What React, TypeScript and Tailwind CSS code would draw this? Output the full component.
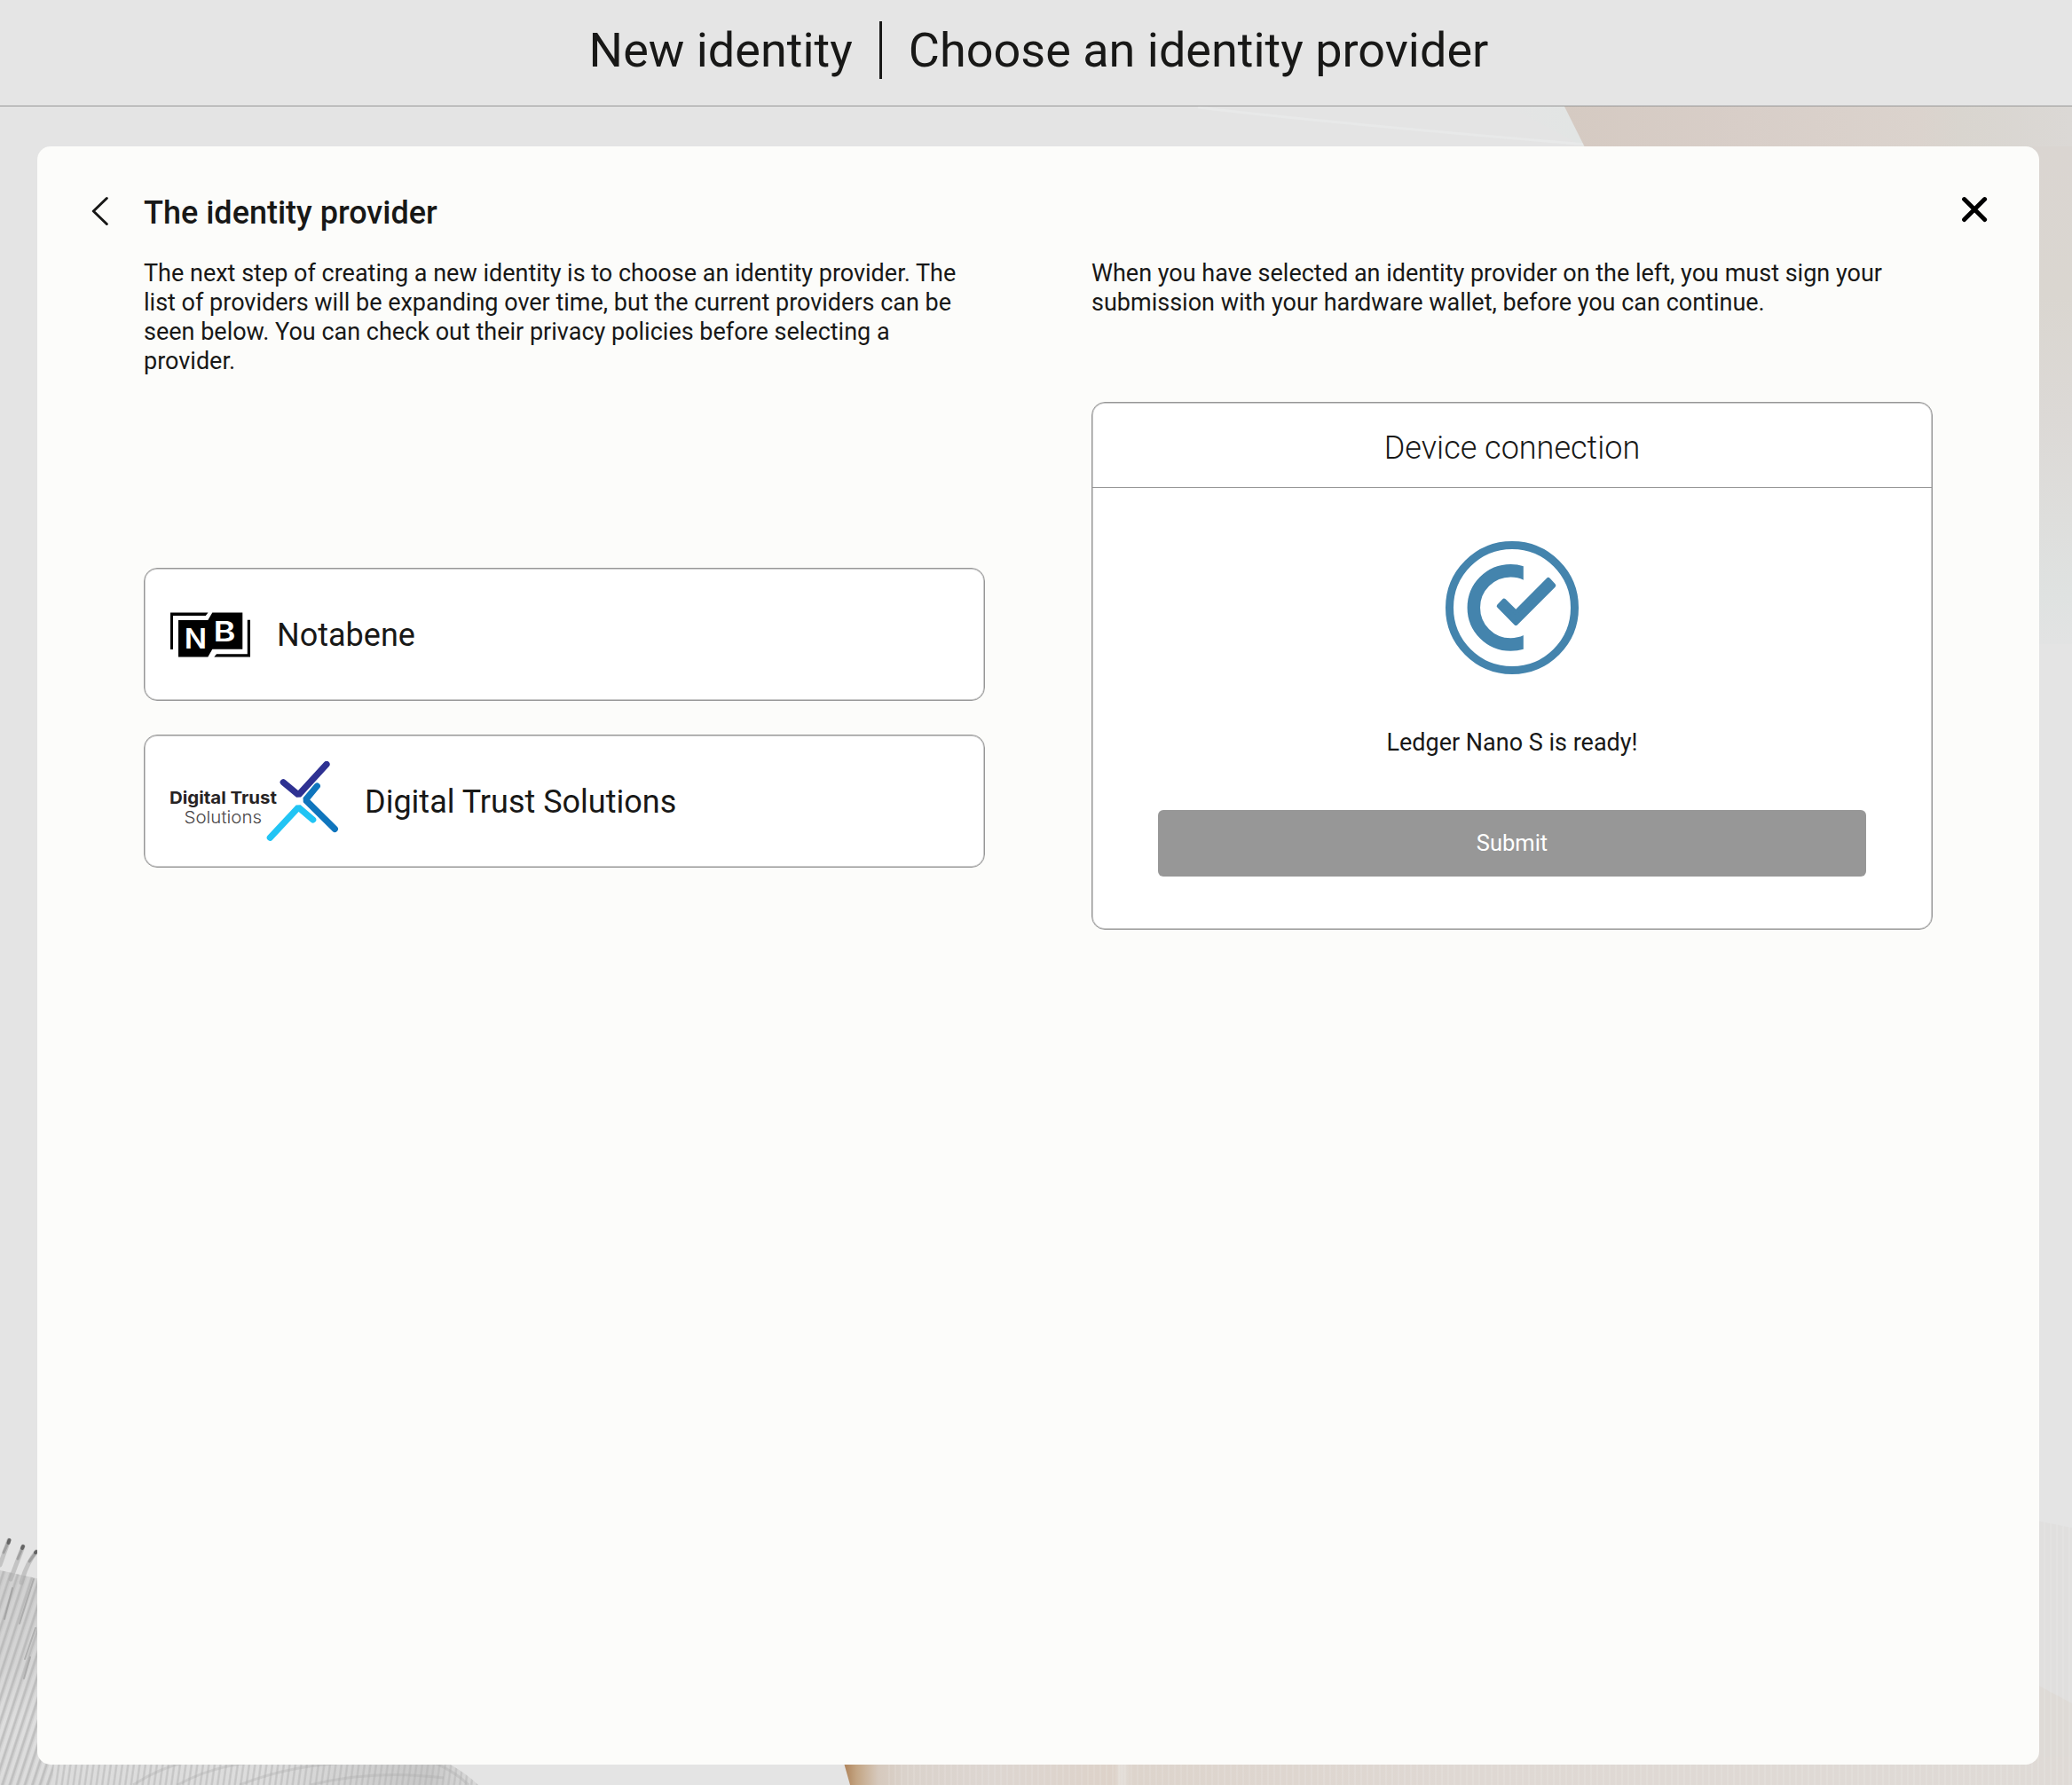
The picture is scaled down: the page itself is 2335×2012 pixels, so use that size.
import type { ReactNode } from "react";

function Backdrop() {
  return (
    <svg className="pointer-events-none absolute inset-0" width="2335" height="2012" viewBox="0 0 2335 2012" aria-hidden="true">
      <defs>
        <linearGradient id="silkTop" gradientUnits="userSpaceOnUse" x1="1763" y1="0" x2="2335" y2="0">
          <stop offset="0" stopColor="#d5cac2" />
          <stop offset="0.35" stopColor="#d8cec8" />
          <stop offset="0.7" stopColor="#dbd3cd" />
          <stop offset="0.78" stopColor="#d9d5cf" />
          <stop offset="1" stopColor="#dbd8d5" />
        </linearGradient>
        <linearGradient id="silkSide" gradientUnits="userSpaceOnUse" x1="0" y1="165" x2="0" y2="726">
          <stop offset="0" stopColor="#dad5d1" />
          <stop offset="0.3" stopColor="#dad6d0" />
          <stop offset="0.55" stopColor="#dcd9d6" />
          <stop offset="0.75" stopColor="#dededc" />
          <stop offset="0.9" stopColor="#dfe2e1" />
          <stop offset="1" stopColor="#e2e3e3" />
        </linearGradient>
        <linearGradient id="silkLow" gradientUnits="userSpaceOnUse" x1="951" y1="0" x2="2335" y2="0">
          <stop offset="0" stopColor="#ae8259" />
          <stop offset="0.01" stopColor="#c3a482" />
          <stop offset="0.028" stopColor="#d6c9bd" />
          <stop offset="0.05" stopColor="#dad2cb" />
          <stop offset="0.12" stopColor="#ddd6d1" />
          <stop offset="0.22" stopColor="#ddd2c9" />
          <stop offset="0.226" stopColor="#e4dfda" />
          <stop offset="0.234" stopColor="#ddd4cc" />
          <stop offset="0.5" stopColor="#dfd8d3" />
          <stop offset="1" stopColor="#dfdad6" />
        </linearGradient>
        <linearGradient id="mist" gradientUnits="userSpaceOnUse" x1="1700" y1="0" x2="1775" y2="0">
          <stop offset="0" stopColor="#e2e5e4" stopOpacity="0" />
          <stop offset="1" stopColor="#e2e5e4" />
        </linearGradient>
        <linearGradient id="threadShade" gradientUnits="userSpaceOnUse" x1="0" y1="1765" x2="0" y2="2012">
          <stop offset="0" stopColor="#d0d0d0" />
          <stop offset="0.45" stopColor="#d5d5d5" />
          <stop offset="0.7" stopColor="#dedede" />
          <stop offset="1" stopColor="#dcdcdc" />
        </linearGradient>
        <linearGradient id="foldShade" gradientUnits="userSpaceOnUse" x1="300" y1="0" x2="530" y2="0">
          <stop offset="0" stopColor="#b4b4b4" stopOpacity="0" />
          <stop offset="0.8" stopColor="#b4b4b4" stopOpacity="0.5" />
          <stop offset="1" stopColor="#c4c4c4" stopOpacity="0.2" />
        </linearGradient>
        <pattern id="threads" width="8.5" height="40" patternUnits="userSpaceOnUse" patternTransform="skewX(-18)">
          <rect x="0" width="1" height="40" fill="#b4b4b4" opacity="0.5" />
          <rect x="1" width="2" height="40" fill="#a8a8a8" opacity="0.6" />
          <rect x="3" width="1.5" height="40" fill="#bcbcbc" opacity="0.4" />
        </pattern>
        <pattern id="threadsFine" width="6.5" height="40" patternUnits="userSpaceOnUse" patternTransform="skewX(-8)">
          <rect x="0" width="1" height="40" fill="#b4b4b4" opacity="0.4" />
          <rect x="1" width="1.5" height="40" fill="#a8a8a8" opacity="0.5" />
        </pattern>
        <pattern id="weave" width="7" height="40" patternUnits="userSpaceOnUse">
          <rect width="2" height="40" fill="#ffffff" opacity="0.1" />
        </pattern>
      </defs>

      <path d="M1700 120H1763L1788 166H1786Z" fill="url(#mist)" />
      <path d="M1350 121Q1480 137 1790 163" fill="none" stroke="#eaebeb" strokeWidth="3" opacity="0.65" />
      <path d="M1763 120H2335V200H1803Z" fill="url(#silkTop)" />
      <rect x="2290" y="165" width="45" height="561" fill="url(#silkSide)" />

      <path d="M2290 1713L2335 1722V2012H2290Z" fill="#e0dfde" />
      <path d="M2290 1896L2335 1920V2012H2290Z" fill="#dedad6" />
      <path d="M2290 1713L2335 1722V2012H2290Z" fill="url(#weave)" />

      <path d="M949 1980L958 2012H2335V1980Z" fill="url(#silkLow)" />
      <path d="M1000 1980V2012H2335V1980Z" fill="url(#weave)" />

      <path d="M0 1770L50 1781V1980H490Q520 1994 539 2012H0Z" fill="url(#threadShade)" />
      <path d="M0 1770L50 1781V1980H60V2012H0Z" fill="url(#threads)" />
      <path d="M60 1980H490Q520 1994 539 2012H60Z" fill="url(#threadsFine)" />
      <path d="M300 1980H490Q520 1994 539 2012H300Z" fill="url(#foldShade)" />
      <path d="M150 2012Q180 1992 215 1985M200 2012Q240 1990 290 1986M270 2012Q330 1988 400 1987M350 2012Q420 1994 500 2004M485 1985Q512 1996 528 2012" fill="none" stroke="#acacac" strokeWidth="3" opacity="0.35" />
      <g fill="none" strokeLinecap="round">
        <path d="M10 1736L0 1764M26 1743L12 1780M41 1749Q30 1762 24 1784" stroke="#adadad" strokeWidth="5" opacity="0.6" />
        <path d="M10.5 1736L4 1750M26 1743L20 1757M41 1749L33 1760" stroke="#8a8a8a" strokeWidth="3" opacity="0.6" />
        <path d="M10.5 1736L9.5 1739M26 1743L25 1745M41 1749L40 1750" stroke="#505050" strokeWidth="4" opacity="0.75" />
        <path d="M14 1790L5 1825M38 1780L22 1830M40 1835L28 1870M34 1868L27 1892" stroke="#8c8c8c" strokeWidth="2" opacity="0.5" />
      </g>
    </svg>
  );
}

function NotabeneLogo() {
  return (
    <svg width="90" height="51" viewBox="0 0 90 51" className="shrink-0" role="img" aria-label="Notabene logo">
      <path d="M0 .5H42.5L39.8 3.9H3V42H0Z" />
      <path d="M86.8 8.7H90V50.5H49.3L52 47.2H86.8Z" />
      <path d="M9 9H42.3L47.3 .5H81.3V41.8H47.3L42.3 50.5H9Z" />
      <g fill="#fff" fontFamily="Inter, sans-serif" fontWeight="600" fontSize="31">
        <text x="15.8" y="41.2" textLength="25.4" lengthAdjust="spacingAndGlyphs">N</text>
        <text x="48.4" y="32.8" textLength="25" lengthAdjust="spacingAndGlyphs">B</text>
      </g>
    </svg>
  );
}

function DigitalTrustLogo() {
  return (
    <svg width="190" height="90" viewBox="0 0 190 90" className="-mr-px shrink-0" role="img" aria-label="Digital Trust Solutions logo">
      <g fontFamily="Inter, sans-serif">
        <text x="-1" y="48" fontSize="19" fontWeight="700" fill="#272324" textLength="121" lengthAdjust="spacingAndGlyphs">Digital Trust</text>
        <text x="15.5" y="69.5" fontSize="19" fontWeight="300" fill="#4a4748" textLength="87.5" lengthAdjust="spacingAndGlyphs">Solutions</text>
      </g>
      <g fill="none" strokeWidth="7.2" strokeLinecap="round" strokeLinejoin="bevel">
        <path d="M127.2 23.7L144.4 38L176 3.5" stroke="#2e3192" />
        <path d="M165.3 28L152.3 43.6L185.3 76.4" stroke="#0f75bd" />
        <path d="M112.3 86.2L144.3 52L160.7 66" stroke="#21c4f4" />
      </g>
    </svg>
  );
}

function ConnectedIcon() {
  return (
    <svg width="150" height="150" viewBox="0 0 150 150" className="shrink-0" aria-hidden="true">
      <defs>
        <clipPath id="openSide">
          <rect width="87.8" height="150" />
        </clipPath>
      </defs>
      <circle cx="75" cy="75" r="70.5" fill="none" stroke="#4484ad" strokeWidth="9" />
      <circle cx="73.4" cy="74.9" r="41.6" fill="none" stroke="#4484ad" strokeWidth="14.5" clipPath="url(#openSide)" />
      <path d="M60.2 73.1L65.9 67.1L79.3 80.2L115.8 43.4L121.8 49.9L79.3 92.4Z" fill="#4484ad" stroke="#4484ad" strokeWidth="5" strokeLinejoin="round" />
    </svg>
  );
}

const outline = "rounded-[15px] border border-[#979797] bg-white shadow-[inset_0_0_0_1px_#cbcbcb]";

function ProviderCard({ logo, name }: { logo: ReactNode; name: string }) {
  return (
    <button className={`flex h-[150px] w-full items-center gap-[30px] px-[29px] text-left text-[36px] ${outline}`}>
      {logo}
      <span className="pt-0.5">{name}</span>
    </button>
  );
}

export default function App() {
  return (
    <div className="relative flex h-[2012px] w-[2335px] flex-col overflow-hidden bg-[#e4e4e4] font-['Roboto',sans-serif] text-[#181817]">
      <Backdrop />
      <header className="relative flex h-[120px] shrink-0 items-start justify-center border-b border-[#979797] bg-[#e5e5e5] pt-6 pl-[6px] text-[54px] leading-[65px]">
        <h1>New identity</h1>
        <span className="ml-[30px] border-l-3 border-[#181817] pl-[30px]">Choose an identity provider</span>
      </header>

      <main className="relative mx-[42px] mt-[45px] h-[1824px] w-[2256px] rounded-[15px] bg-[#fcfcfa] pt-[51px]">
        <div className="flex h-12 items-start pr-[58px] pl-[60px]">
          <button aria-label="Back" className="mt-[5px]">
            <svg width="20" height="34" viewBox="0 0 20 34" fill="none" stroke="#181817" strokeWidth="3" strokeLinecap="round" strokeLinejoin="round">
              <path d="M18.3 2.5L3.3 17L18.3 31.5" />
            </svg>
          </button>
          <h2 className="ml-10 text-[36px] leading-[48px] font-medium">The identity provider</h2>
          <button aria-label="Close" className="mt-[5px] ml-auto">
            <svg width="30" height="30" viewBox="0 0 30 30" fill="none" stroke="#000" strokeWidth="5" strokeLinecap="round">
              <path d="M3.6 3.6L26.6 26.6M26.6 3.6L3.6 26.6" />
            </svg>
          </button>
        </div>

        <div className="mt-7 grid grid-cols-2 gap-[120px] px-[120px] text-[27px] leading-[33px]">
          <section>
            <p>
              The next step of creating a new identity is to choose an identity provider. The list of providers will be
              expanding over time, but the current providers can be seen below. You can check out their privacy policies
              before selecting a provider.
            </p>
            <div className="mt-54 flex flex-col gap-[38px]">
              <ProviderCard logo={<NotabeneLogo />} name="Notabene" />
              <ProviderCard logo={<DigitalTrustLogo />} name="Digital Trust Solutions" />
            </div>
          </section>

          <section>
            <p>
              When you have selected an identity provider on the left, you must sign your submission with your hardware
              wallet, before you can continue.
            </p>
            <div className={`mt-[95px] flex h-[595px] flex-col ${outline}`}>
              <h3 className="h-24 shrink-0 border-b border-[#979797] pt-[26px] text-center text-[36px] leading-[50px] font-light">
                Device connection
              </h3>
              <div className="flex flex-col items-center px-[74px] pt-[60px]">
                <ConnectedIcon />
                <p className="mt-[61px]">Ledger Nano S is ready!</p>
                <button className="mt-[59px] h-[75px] w-full rounded-[6px] bg-[#979797] text-[25.5px] text-white">Submit</button>
              </div>
            </div>
          </section>
        </div>
      </main>
    </div>
  );
}
